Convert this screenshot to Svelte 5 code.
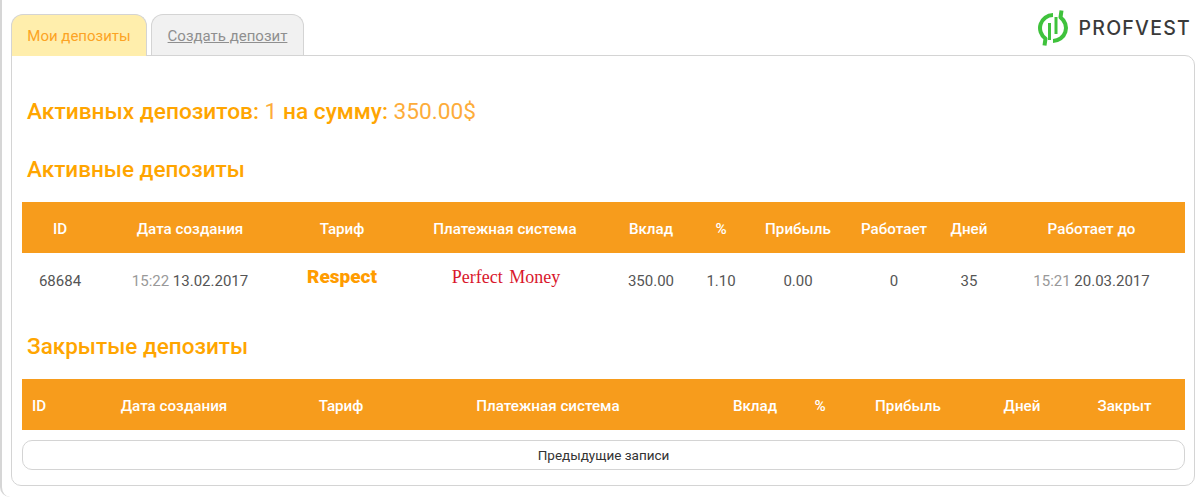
<script>
  const first = ['ID','Дата создания','Тариф','Платежная система','Вклад','%','Прибыль','Работает','Дней','Работает до'];
  const second = ['ID','Дата создания','Тариф','Платежная система','Вклад','%','Прибыль','Дней','Закрыт'];
</script>

<div class="page">
  <div class="top">
    <div class="tabs">
      <div class="tab active">Мои депозиты</div>
      <div class="tab idle"><span>Создать депозит</span></div>
    </div>
    <div class="logo">
      <svg width="34" height="38" viewBox="0 0 34 38" fill="none" stroke="#3fc23c" stroke-linejoin="round">
        <path d="M23.5 1.5 L22.5 8.4 A13 13 0 0 1 15 32" stroke-width="4"/>
        <path d="M6.5 36.5 L7.5 29.6 A13 13 0 0 1 15 6" stroke-width="4"/>
        <path d="M11.5 14 V31" stroke-width="3"/>
        <path d="M18 8 V25" stroke-width="3"/>
      </svg>
      <span>PROFVEST</span>
    </div>
  </div>

  <div class="panel">
    <h1>Активных депозитов: <em>1</em> на сумму: <em>350.00$</em></h1>
    <h2>Активные депозиты</h2>
    <table class="one">
      <thead>
        <tr>{#each first as h}<th>{h}</th>{/each}</tr>
      </thead>
      <tbody>
        <tr>
          <td>68684</td>
          <td><i>15:22</i> 13.02.2017</td>
          <td class="plan"><b>Respect</b></td>
          <td class="pay"><span>Perfect Money</span></td>
          <td>350.00</td>
          <td>1.10</td>
          <td>0.00</td>
          <td>0</td>
          <td>35</td>
          <td><i>15:21</i> 20.03.2017</td>
        </tr>
      </tbody>
    </table>
    <h2 class="closed">Закрытые депозиты</h2>
    <table class="two">
      <thead>
        <tr>{#each second as h}<th>{h}</th>{/each}</tr>
      </thead>
    </table>
    <button class="more">Предыдущие записи</button>
  </div>
</div>

<style>
  :global(body) {
    margin: 0;
    background: #fff;
  }
  .page {
    width: 1198px;
    height: 497px;
    box-sizing: border-box;
    padding: 14px 3px 0 9px;
    font-family: Roboto, "Liberation Sans", sans-serif;
    border-left: 2px solid #d6d6d6;
    border-bottom-left-radius: 10px;
    overflow: hidden;
  }
  .top {
    display: flex;
    justify-content: space-between;
    height: 41px;
  }
  .tabs {
    display: flex;
    gap: 4px;
  }
  .tab {
    box-sizing: border-box;
    height: 42px;
    border: 1px solid #d4d4d4;
    border-radius: 12px 12px 0 0;
    font-size: 15px;
    line-height: 42px;
    text-align: center;
    position: relative;
    z-index: 1;
  }
  .active {
    width: 136px;
    background: #ffeeac;
    color: #fca324;
    border-bottom: 0;
  }
  .idle {
    width: 153px;
    background: #f1f1f1;
    color: #8f8f8f;
    height: 41px;
    border-bottom: 0;
  }
  .idle span {
    text-decoration: underline;
  }
  .logo {
    display: flex;
    align-items: center;
    gap: 7px;
    height: 38px;
    margin: -5px 4px 0 0;
    color: #3a3a3a;
    font-family: Inter, Roboto, sans-serif;
    font-size: 19.5px;
    font-weight: 500;
    letter-spacing: 1.25px;
  }
  .panel {
    box-sizing: border-box;
    width: 1184px;
    height: 431px;
    border: 1px solid #d4d4d4;
    border-radius: 0 10px 10px 10px;
    padding: 41px 10px 0;
  }
  h1, h2 {
    margin: 0;
    color: #ffa500;
    font-weight: 500;
    padding-left: 5px;
  }
  h1 {
    font-size: 22.7px;
    line-height: 29px;
  }
  em {
    font-style: normal;
    font-weight: 400;
    color: #fdac3a;
  }
  h2 {
    font-size: 22.5px;
    line-height: 28px;
    margin-top: 29px;
  }
  h2.closed {
    margin-top: 25px;
  }
  table {
    width: 1163px;
    table-layout: fixed;
    border-collapse: collapse;
    margin-top: 19px;
    text-align: center;
  }
  th {
    height: 51px;
    padding: 2px 0 0;
    box-sizing: border-box;
    background: #f79c1c;
    color: #fff;
    font-size: 15.2px;
    font-weight: 500;
    text-align: center;
  }
  td {
    height: 54px;
    padding: 2px 0 0;
    box-sizing: border-box;
    color: #555;
    font-size: 15px;
  }
  td i {
    font-style: normal;
    color: #999;
  }
  .plan b {
    color: #ff9c00;
    font-size: 19px;
    font-weight: 900;
    position: relative;
    top: -5px;
  }
  .pay span {
    color: #d9172c;
    font-family: "Liberation Serif", serif;
    font-size: 18px;
    word-spacing: 2px;
    position: relative;
    top: -4px;
    left: 1px;
  }
  .one th:nth-child(1) { width: 76px; }
  .one th:nth-child(2) { width: 184px; }
  .one th:nth-child(3) { width: 120px; }
  .one th:nth-child(4) { width: 206px; }
  .one th:nth-child(5) { width: 86px; }
  .one th:nth-child(6) { width: 54px; }
  .one th:nth-child(7) { width: 100px; }
  .one th:nth-child(8) { width: 92px; }
  .one th:nth-child(9) { width: 58px; }
  .two th:nth-child(1) { width: 34px; }
  .two th:nth-child(2) { width: 236px; }
  .two th:nth-child(3) { width: 98px; }
  .two th:nth-child(4) { width: 316px; }
  .two th:nth-child(5) { width: 98px; }
  .two th:nth-child(6) { width: 32px; }
  .two th:nth-child(7) { width: 144px; }
  .two th:nth-child(8) { width: 84px; }
  .more {
    display: block;
    box-sizing: border-box;
    width: 1163px;
    height: 30px;
    margin-top: 10px;
    background: #fff;
    border: 1px solid #d4d4d4;
    border-radius: 10px;
    color: #333;
    font-family: inherit;
    font-size: 13.5px;
  }
</style>
